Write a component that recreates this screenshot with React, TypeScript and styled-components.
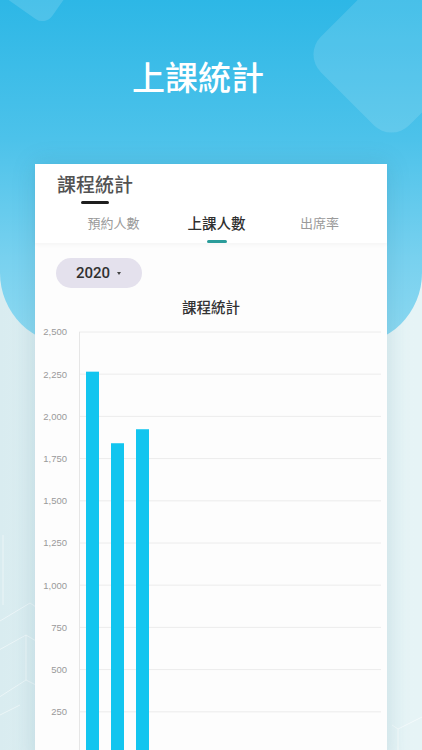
import React from "react";
import styled, { createGlobalStyle } from "styled-components";

const GlobalStyle = createGlobalStyle`
  html, body { margin: 0; padding: 0; }
  body { font-family: "Noto Sans CJK TC", "Noto Sans", sans-serif; }
  * { box-sizing: border-box; }
`;

const Page = styled.div`
  position: relative;
  width: 422px;
  height: 750px;
  overflow: hidden;
  display: flex;
  flex-direction: column;
  align-items: center;
  padding-top: 55px;
  background: linear-gradient(90deg, #d9ecf0 0%, #e8f5f6 50%, #e6f4f6 100%);

  &::before {
    content: "";
    position: absolute;
    left: 0;
    right: 0;
    top: 0;
    height: 345px;
    border-radius: 0 0 72px 72px;
    background: linear-gradient(180deg, #2db7e6 0%, #4cc2ea 40%, #78d1ef 75%, #8ed9f1 100%);
  }
`;

const Blob = styled.div<{ $size: number; $left: number; $top: number; $rot: number; $alpha: number }>`
  position: absolute;
  left: ${(p) => p.$left}px;
  top: ${(p) => p.$top}px;
  width: ${(p) => p.$size}px;
  height: ${(p) => p.$size}px;
  border-radius: 20%;
  transform: rotate(${(p) => p.$rot}deg);
  background: rgba(255, 255, 255, ${(p) => p.$alpha});
`;

const LineArt = styled.svg`
  position: absolute;
  pointer-events: none;
`;

const Heading = styled.h1`
  position: relative;
  margin: 0 26px 0 0;
  font-size: 33px;
  line-height: 42px;
  font-weight: 500;
  color: #ffffff;
`;

const Card = styled.section`
  position: relative;
  margin-top: 67px;
  width: 352px;
  flex: 1;
  display: flex;
  flex-direction: column;
  background: #ffffff;
  box-shadow: 0 0 22px rgba(40, 110, 140, 0.18);
`;

const CardHead = styled.div`
  display: flex;
  flex-direction: column;
  padding: 8px 0 0 22px;
  box-shadow: 0 2px 4px rgba(0, 0, 0, 0.035);
  position: relative;
  z-index: 1;
`;

const TitleBlock = styled.div`
  display: inline-flex;
  flex-direction: column;
  align-items: center;
  align-self: flex-start;
  gap: 5px;
`;

const CardTitle = styled.h2`
  margin: 0;
  font-size: 19px;
  line-height: 24px;
  font-weight: 500;
  color: #525252;
`;

const TitleBar = styled.span`
  display: block;
  width: 28px;
  height: 3px;
  border-radius: 2px;
  background: #1e1e1e;
`;

const Tabs = styled.div`
  display: grid;
  grid-template-columns: repeat(3, 103px);
  margin: 9px 0 0 5px;
`;

const Tab = styled.div<{ $active?: boolean }>`
  position: relative;
  display: flex;
  justify-content: center;
  height: 30px;
  font-size: ${(p) => (p.$active ? "14.5px" : "13px")};
  line-height: 20px;
  font-weight: ${(p) => (p.$active ? 500 : 400)};
  color: ${(p) => (p.$active ? "#2f2f2f" : "#9a9a9a")};

  &::after {
    content: "";
    display: ${(p) => (p.$active ? "block" : "none")};
    position: absolute;
    bottom: 0;
    left: 50%;
    width: 20px;
    height: 3px;
    margin-left: -10px;
    border-radius: 2px;
    background: #2a9c9a;
  }
`;

const Body = styled.div`
  flex: 1;
  display: flex;
  flex-direction: column;
  padding-top: 15px;
  background: #fdfdfd;
`;

const YearPill = styled.button`
  align-self: flex-start;
  margin-left: 21px;
  width: 86px;
  height: 30px;
  border: none;
  border-radius: 15px;
  background: #e4e1ed;
  display: flex;
  align-items: center;
  gap: 7px;
  padding: 0 0 0 20px;
  font-family: "Roboto", "Noto Sans", sans-serif;
  font-size: 15px;
  font-weight: 500;
  color: #303030;
`;

const Caret = styled.span`
  width: 0;
  height: 0;
  border-left: 2.5px solid transparent;
  border-right: 2.5px solid transparent;
  border-top: 3px solid #444;
`;

const ChartTitle = styled.div`
  margin-top: 9px;
  text-align: center;
  font-size: 14.5px;
  line-height: 20px;
  font-weight: 500;
  color: #333333;
`;

const ChartSvg = styled.svg`
  display: block;
  margin-top: 7px;
  width: 352px;
  height: 440px;
  overflow: visible;
`;

const TICKS = [2500, 2250, 2000, 1750, 1500, 1250, 1000, 750, 500, 250];
const BARS = [2265, 1841, 1924];

export default function App() {
  const top = 8;
  const step = 42.2;
  const zeroY = top + step * 10;
  const toY = (v: number) => zeroY - (v / 2500) * (step * 10);

  return (
    <>
      <GlobalStyle />
      <Page>
        <Blob $size={60} $left={8} $top={-46} $rot={35} $alpha={0.14} />
        <Blob $size={125} $left={329} $top={-8} $rot={45} $alpha={0.13} />
        <LineArt width="40" height="200" viewBox="0 0 40 200" style={{ left: 0, top: 535 }}>
          <g fill="none" stroke="#ffffff" strokeOpacity="0.6" strokeWidth="0.8">
            <path d="M3 0 V70" />
            <path d="M-10 92 L30 68 L36 72" />
            <path d="M-10 120 L26 100 L26 145 L-10 168" />
            <path d="M26 100 L36 106" />
            <path d="M26 145 L36 150" />
            <path d="M-10 185 L20 170" />
          </g>
        </LineArt>
        <LineArt width="30" height="40" viewBox="0 0 30 40" style={{ right: 0, top: 715 }}>
          <g fill="none" stroke="#ffffff" strokeOpacity="0.7" strokeWidth="0.8">
            <path d="M6 40 V14 L30 2" />
            <path d="M6 14 L0 10" />
          </g>
        </LineArt>
        <Heading>上課統計</Heading>
        <Card>
          <CardHead>
            <TitleBlock>
              <CardTitle>課程統計</CardTitle>
              <TitleBar />
            </TitleBlock>
            <Tabs>
              <Tab>預約人數</Tab>
              <Tab $active>上課人數</Tab>
              <Tab>出席率</Tab>
            </Tabs>
          </CardHead>
          <Body>
            <YearPill>
              2020
              <Caret />
            </YearPill>
            <ChartTitle>課程統計</ChartTitle>
            <ChartSvg viewBox="0 0 352 440">
              {TICKS.map((t, i) => {
                const y = top + step * i;
                return (
                  <g key={t}>
                    <line x1={44} x2={346} y1={y} y2={y} stroke="#ececec" strokeWidth={1} />
                    <text
                      x={32}
                      y={y + 3.3}
                      textAnchor="end"
                      fontFamily="Liberation Sans, Arial, sans-serif"
                      fontSize="9.5"
                      fill="#9a9a9a"
                    >
                      {t.toLocaleString("en-US")}
                    </text>
                  </g>
                );
              })}
              <line x1={44.5} x2={44.5} y1={top} y2={zeroY} stroke="#e6e6e6" strokeWidth={1} />
              {BARS.map((v, i) => (
                <rect
                  key={i}
                  x={51 + i * 25}
                  y={toY(v)}
                  width={13}
                  height={zeroY - toY(v)}
                  fill="#12c5ef"
                />
              ))}
            </ChartSvg>
          </Body>
        </Card>
      </Page>
    </>
  );
}
